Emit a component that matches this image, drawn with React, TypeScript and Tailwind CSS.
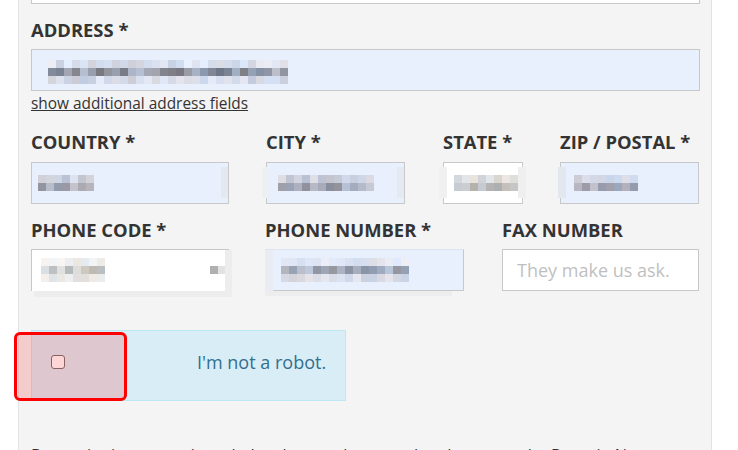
import React from "react";

type Tone = [number, number, number, number];

function makeRand(seed: number) {
  let s = seed;
  return () => {
    s = (s * 9301 + 49297) % 233280;
    return s / 233280;
  };
}

function Mosaic({
  cols,
  seed,
  tones,
  cell = 8,
}: {
  cols: number;
  seed: number;
  tones: Tone[];
  cell?: number;
}) {
  const r = makeRand(seed);
  return (
    <div className="flex flex-col">
      {tones.map((t, y) => (
        <div key={y} className="flex">
          {Array.from({ length: cols }).map((_, x) => {
            const d = (r() - 0.5) * t[3];
            const h = (r() - 0.5) * 14;
            const c = (v: number) => Math.max(0, Math.min(255, Math.round(v)));
            const bg = `rgb(${c(t[0] + d + h)},${c(t[1] + d)},${c(t[2] + d - h)})`;
            return <div key={x} style={{ width: cell, height: cell, background: bg }} />;
          })}
        </div>
      ))}
    </div>
  );
}

const label = "block text-[18.4px] leading-[24px] font-bold text-[#333] whitespace-nowrap";
const blueBox = "relative h-[42px] border border-[#c8c8c8] bg-[#e8f0fe]";

export default function App() {
  return (
    <div className="w-[738px] h-[450px] overflow-hidden bg-white font-['Open_Sans','Liberation_Sans',sans-serif]">
      <div className="relative flex flex-col ml-[18px] w-[694px] h-[450px] bg-[#f4f4f4] border-l border-r border-[#e3e3e3] pl-[12px] pr-[11px]">
        {/* top input (mostly scrolled off) */}
        <div className="-mt-[38px] h-[42px] shrink-0 border border-[#c8c8c8] bg-white" />

        <label className={`${label} mt-[14px]`}>ADDRESS *</label>
        <div className={`${blueBox} shrink-0 mt-[7px] pl-[16px] pt-[10px]`}>
          <Mosaic
            cols={30}
            seed={17}
            tones={[
              [218, 224, 238, 34],
              [150, 156, 170, 76],
              [214, 220, 234, 34],
            ]}
          />
        </div>
        <a className="block mt-[3px] text-[15.4px] leading-[20px] text-[#333] underline w-max">
          show additional address fields
        </a>

        {/* Row 1 */}
        <div className="flex mt-[16px]">
          <div className="w-[198px]">
            <label className={label}>COUNTRY *</label>
            <div className={`${blueBox} mt-[8px] pl-[6px] pt-[12px]`}>
              <Mosaic
                cols={7}
                seed={5}
                tones={[
                  [206, 211, 224, 34],
                  [168, 172, 186, 60],
                ]}
              />
              <div className="absolute right-0 top-[4px] w-[7px] h-[31px] bg-[#e4e9f1]" />
            </div>
          </div>
          <div className="ml-[37px] w-[139px]">
            <label className={label}>CITY *</label>
            <div className={`${blueBox} mt-[8px] pl-[11px] pt-[12px]`}>
              <Mosaic
                cols={12}
                seed={41}
                tones={[
                  [204, 208, 222, 34],
                  [166, 170, 184, 60],
                ]}
              />
              <div className="absolute -left-[5px] top-[4px] w-[8px] h-[31px] bg-[#edf0f3]" />
              <div className="absolute right-0 top-[4px] w-[7px] h-[31px] bg-[#e5eaf2]" />
            </div>
          </div>
          <div className="ml-[38px] w-[80px]">
            <label className={label}>STATE *</label>
            <div className="relative h-[42px] border border-[#c8c8c8] bg-white mt-[8px] pl-[10px] pt-[12px]">
              <Mosaic
                cols={8}
                seed={77}
                tones={[
                  [222, 222, 222, 26],
                  [194, 194, 194, 50],
                ]}
              />
              <div className="absolute -left-[5px] top-[4px] w-[8px] h-[31px] bg-[#f0f0f0]" />
              <div className="absolute right-[-4px] top-[4px] w-[8px] h-[31px] bg-[#efefef]" />
            </div>
          </div>
          <div className="ml-[37px] w-[139px]">
            <label className={label}>ZIP / POSTAL *</label>
            <div className={`${blueBox} mt-[8px] pl-[13px] pt-[12px]`}>
              <Mosaic
                cols={8}
                seed={23}
                tones={[
                  [208, 214, 228, 24],
                  [162, 166, 182, 60],
                ]}
              />
              <div className="absolute -left-[3px] top-[4px] w-[8px] h-[31px] bg-[#e3e8f0]" />
            </div>
          </div>
        </div>

        {/* Row 2 */}
        <div className="flex mt-[14px]">
          <div className="w-[198px]">
            <label className={label}>PHONE CODE *</label>
            <div className="relative h-[42px] border-t border-l border-[#c8c8c8] bg-white mt-[7px] pl-[9px] pt-[8px]">
              <Mosaic
                cols={8}
                seed={91}
                tones={[
                  [238, 238, 238, 16],
                  [206, 206, 204, 44],
                  [232, 232, 232, 18],
                ]}
              />
              <div className="absolute left-[178px] top-[16px] flex">
                <div className="w-[8px] h-[8px] bg-[#b0b0b0]" />
                <div className="w-[8px] h-[8px] bg-[#e2e2e2]" />
              </div>
              <div className="absolute -right-[3px] top-0 w-[7px] h-[47px] bg-[#ededed]" />
              <div className="absolute left-[2px] -right-[3px] top-[41px] h-[6px] bg-[#ededed]" />
            </div>
          </div>
          <div className="ml-[36px] w-[199px]">
            <label className={label}>PHONE NUMBER *</label>
            <div className="relative h-[42px] border border-[#c8c8c8] border-t-[#dfe5ee] border-l-[#e3e7ed] bg-[#e8f0fe] mt-[7px] pl-[15px] pt-[8px]">
              <Mosaic
                cols={16}
                seed={63}
                tones={[
                  [222, 226, 238, 24],
                  [166, 172, 186, 60],
                  [216, 220, 232, 24],
                ]}
              />
              <div className="absolute -left-[1px] top-0 w-[8px] h-[41px] bg-[#e9edf3]" />
              <div className="absolute -left-[1px] w-[187px] top-[41px] h-[5px] bg-[#ededed]" />
            </div>
          </div>
          <div className="ml-[38px] w-[197px]">
            <label className={label}>FAX NUMBER</label>
            <input
              type="text"
              placeholder="They make us ask."
              className="mt-[7px] block w-full h-[42px] border border-[#c8c8c8] bg-white px-[14px] text-[18px] text-[#333] placeholder:text-[#bfbfbf] outline-none font-['Open_Sans','Liberation_Sans',sans-serif]"
            />
          </div>
        </div>

        {/* reCAPTCHA-like box */}
        <div className="relative shrink-0 mt-[39px] w-[315px] h-[71px] border border-[#bce8f1] bg-[#d9edf7] flex items-start">
          <div className="ml-[19px] mt-[24px] w-[14px] h-[14px] rounded-[3px] border border-[#747474] bg-white" />
          <span className="ml-[132px] mt-[19px] text-[18px] leading-[24px] text-[#31708f] whitespace-nowrap">
            I'm not a robot.
          </span>
          <div className="absolute -left-[18px] top-[1px] w-[113px] h-[69px] rounded-[6px] border-[3px] border-[#ff0000] bg-[rgba(255,0,0,0.16)]" />
        </div>

        <p className="mt-[44px] shrink-0 text-[16.2px] leading-[20px] text-[#333]">
          By continuing, you acknowledge that you have read and agree to the Domain Name Registration Agreement.
        </p>
      </div>
    </div>
  );
}
